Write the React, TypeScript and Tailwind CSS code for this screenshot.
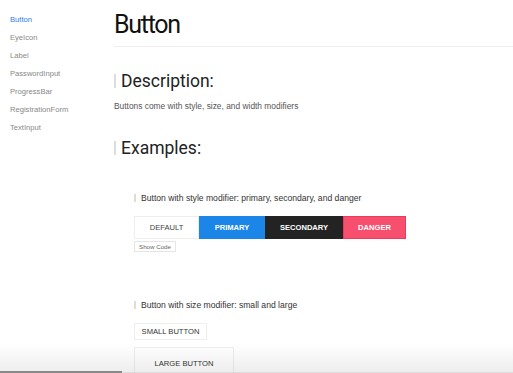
const NAV = ['Button', 'EyeIcon', 'Label', 'PasswordInput', 'ProgressBar', 'RegistrationForm', 'TextInput']

function SectionTitle({ children }: { children: string }) {
  return (
    <h2 className="flex items-center gap-[5px] font-['Roboto',sans-serif] text-[17.5px] leading-[20px] text-[#222]">
      <span className="w-[2px] h-[14px] bg-[#ddd]" />
      {children}
    </h2>
  )
}

function ExampleTitle({ children }: { children: string }) {
  return (
    <div className="flex items-center gap-[5px] text-[8.6px] leading-[12px] text-[#333]">
      <span className="w-[2px] h-[8px] bg-[#ddd]" />
      {children}
    </div>
  )
}

export default function App() {
  return (
    <div className="relative h-[373px] w-[513px] overflow-hidden bg-white font-['Liberation_Sans',Arial,sans-serif]">
      <div className="flex">
        {/* Sidebar */}
        <nav className="w-[114px] shrink-0 pt-[14px] pl-[10px] flex flex-col gap-[6px]">
          {NAV.map((n, i) => (
            <a key={n} className={`text-[7.6px] leading-[12px] ${i === 0 ? 'text-[#2f7de1]' : 'text-[#888]'}`}>
              {n}
            </a>
          ))}
        </nav>

        {/* Main */}
        <main className="flex-1">
          <h1 className="pt-[11px] pb-[7px] border-b border-[#eee] font-['Roboto',sans-serif] text-[25px] tracking-[-1.3px] leading-[28px] text-[#111]">
            Button
          </h1>

          <div className="mt-[24px]">
            <SectionTitle>Description:</SectionTitle>
          </div>
          <p className="mt-[9px] text-[8.4px] leading-[12px] text-[#555]">Buttons come with style, size, and width modifiers</p>

          <div className="mt-[26px]">
            <SectionTitle>Examples:</SectionTitle>
          </div>

          <div className="pl-[20px] mt-[34px]">
            <ExampleTitle>Button with style modifier: primary, secondary, and danger</ExampleTitle>
            <div className="mt-[12px] flex h-[23px] text-[7.6px]">
              <button className="w-[65px] border border-[#eee] text-[#444] uppercase">Default</button>
              <button className="w-[66px] bg-[#1b86e8] text-white font-bold uppercase">Primary</button>
              <button className="w-[78px] bg-[#232323] text-white font-bold uppercase">Secondary</button>
              <button className="w-[63px] bg-[#f74f6e] border border-[#f0385a] text-white font-bold uppercase">Danger</button>
            </div>
            <button className="block mt-[2px] h-[11px] px-[4px] border border-[#e5e5e5] text-[6.2px] leading-[9px] text-[#666]">
              Show Code
            </button>

            <div className="mt-[47px]">
              <ExampleTitle>Button with size modifier: small and large</ExampleTitle>
            </div>
            <button className="block mt-[12px] w-[73px] h-[17px] border border-[#eee] text-[7.6px] text-[#333] uppercase">
              Small Button
            </button>
            <button className="block mt-[7px] w-[100px] h-[33px] border border-[#eee] text-[7.6px] text-[#333] uppercase">
              Large Button
            </button>
          </div>
        </main>
      </div>

      {/* Bottom shadow overlay */}
      <div className="pointer-events-none absolute inset-x-0 bottom-0 h-[30px] bg-gradient-to-b from-black/0 to-black/[0.07]" />
      <div className="pointer-events-none absolute inset-x-0 bottom-0 h-px bg-[#ddd]" />
      <div className="pointer-events-none absolute left-0 bottom-0 h-[2px] w-[122px] bg-[#888]" />
    </div>
  )
}
